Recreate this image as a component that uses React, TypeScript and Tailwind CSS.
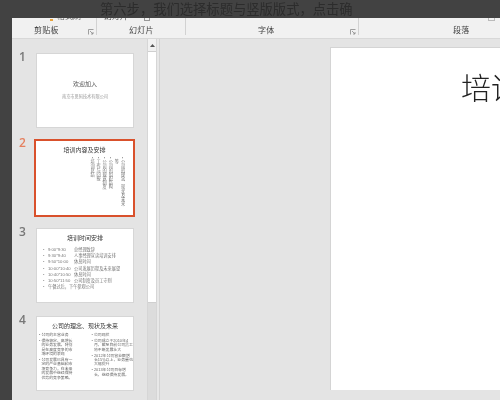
const cjk = "font-['Liberation_Sans','Noto_Sans_CJK_SC',sans-serif]";

function Launcher() {
  return (
    <svg width="6" height="6" viewBox="0 0 6 6" className="shrink-0">
      <path d="M0.5 5.5V0.5H5.5M2 2L5 5M5 3V5H3" fill="none" stroke="#8a8a8a" strokeWidth="0.8" />
    </svg>
  );
}

function Group({ w, label, launcher, pad, children }: { w: string; label: string; launcher?: boolean; pad: string; children?: React.ReactNode }) {
  return (
    <div className={`${w} h-full flex flex-col`}>
      <div className="h-[18px] flex border-r border-[#d2d2d2] relative">
        <div className="flex-1 min-w-0 overflow-hidden">{children}</div>
        {launcher && <div className="absolute right-[2px] bottom-[0px]"><Launcher /></div>}
      </div>
      <div className={`-mt-[11px] h-[14px] flex items-center ${pad}`}>
        <span className="text-[8px] leading-[10px] text-[#444] tracking-[0.3px]">{label}</span>
      </div>
    </div>
  );
}

function Thumb({ n, active, children, mt }: { n: number; active?: boolean; children: React.ReactNode; mt: string }) {
  return (
    <div className={`flex ${mt}`}>
      <div className={`w-[24px] pl-[7px] -mt-[3px] text-[12px] leading-[14px] font-['Open_Sans',sans-serif] font-semibold ${active ? "text-[#e5805f]" : "text-[#777]"}`}>{n}</div>
      {active ? (
        <div className="w-[101px] h-[78px] -ml-[2px] border-[2px] border-[#d9512c] bg-white overflow-hidden">{children}</div>
      ) : (
        <div className="w-[98px] h-[75px] border border-[#d6d6d6] bg-white overflow-hidden">{children}</div>
      )}
    </div>
  );
}

const schedule = [
  ["9:00*9:30", "总经理致辞"],
  ["9:30*9:40", "人事经理宣读培训安排"],
  ["9:50*10:00", "休息时间"],
  ["10:00*10:40", "公司发展历程及未来展望"],
  ["10:40*10:50", "休息时间"],
  ["10:50*11:50", "公司制度及员工守则"],
];

export default function App() {
  return (
    <div className="w-[500px] h-[400px] overflow-hidden bg-[#424242]">
      <div className={`w-[502px] h-[402px] overflow-hidden bg-[#424242] flex flex-col blur-[0.4px] ${cjk}`}>
        <div className="h-[18px] shrink-0 pl-[100px] overflow-hidden">
          <div className="text-[13.3px] leading-[19px] text-[#2c2c2c] whitespace-nowrap">第六步，我们选择标题与竖版版式，点击确</div>
        </div>
        <div className="flex-1 flex min-h-0 pl-[12px]">
          <div className="flex-1 flex flex-col min-w-0">
            <div className="h-[21px] shrink-0 bg-[#f1f1f1] border-b border-[#d8d8d8] flex">
              <Group w="w-[85px]" label="剪贴板" launcher pad="pl-[22px]">
                <div className="h-[3px] overflow-hidden flex items-end pl-[38px] gap-[4px]">
                  <div className="w-[3px] h-[2px] bg-[#e8a33d] shrink-0" />
                  <span className="text-[8px] leading-[8px] text-[#666] whitespace-nowrap">格式刷</span>
                </div>
              </Group>
              <Group w="w-[89px]" label="幻灯片" pad="pl-[32px]">
                <div className="h-[3px] overflow-hidden flex items-end pl-[7px] gap-[16px]">
                  <span className="text-[8px] leading-[8px] text-[#555] whitespace-nowrap">幻灯片</span>
                  <div className="w-[6px] h-[6px] border border-[#999] shrink-0" />
                </div>
              </Group>
              <Group w="w-[173px]" label="字体" launcher pad="pl-[72px]" />
              <div className="flex-1 flex flex-col">
                <div className="h-[3px] pl-[129px] overflow-hidden"><div className="w-[7px] h-[3px] border-x border-b border-[#bbb]" /></div>
                <div className="h-[4px]" />
                <div className="h-[14px] pl-[94px] flex items-center">
                  <span className="text-[8px] leading-[10px] text-[#444] tracking-[0.3px]">段落</span>
                </div>
              </div>
            </div>
            <div className="flex-1 flex min-h-0 bg-[#e4e4e4]">
              <div className="w-[135px] shrink-0 pt-[14px]">
                <Thumb n={1} mt="">
                  <div className="h-full flex flex-col items-center pt-[27px]">
                    <div className="text-[6px] leading-[7px] text-[#555]">欢迎加入</div>
                    <div className="mt-[6px] text-[4.2px] leading-[6px] text-[#999] whitespace-nowrap">南京市思码技术有限公司</div>
                  </div>
                </Thumb>
                <Thumb n={2} active mt="mt-[11px]">
                  <div className="h-full flex flex-col pt-[6px]">
                    <div className="text-[6px] leading-[7px] text-[#333] text-center">培训内容及安排</div>
                    <div className="mt-[3px] pr-[8px] flex justify-end">
                      <div className="[writing-mode:vertical-rl] text-[4.2px] leading-[6.1px] text-[#777] whitespace-nowrap">
                        <div>• 公司的理念、现状及未来</div>
                        <div>&nbsp;&nbsp;等</div>
                        <div>• 公司的组织结构</div>
                        <div>• 公司的规章制度</div>
                        <div>• 工作与回报</div>
                        <div>• 培训总结</div>
                      </div>
                    </div>
                  </div>
                </Thumb>
                <Thumb n={3} mt="mt-[11px]">
                  <div className="h-full flex flex-col pt-[6px]">
                    <div className="text-[6px] leading-[7px] text-[#333] text-center">培训时间安排</div>
                    <div className="mt-[5px] pl-[6px] text-[4.2px] leading-[6.2px] text-[#777] whitespace-nowrap">
                      {schedule.map(([t, s]) => (
                        <div key={t} className="flex">
                          <span className="w-[5px]">•</span>
                          <span className="w-[26px]">{t}</span>
                          <span>{s}</span>
                        </div>
                      ))}
                      <div className="flex"><span className="w-[5px]">•</span><span>午餐过后，下午参观公司</span></div>
                    </div>
                  </div>
                </Thumb>
                <Thumb n={4} mt="mt-[13px]">
                  <div className="h-full flex flex-col pt-[6px]">
                    <div className="text-[6px] leading-[7px] text-[#333] text-center whitespace-nowrap">公司的理念、现状及未来</div>
                    <div className="mt-[3px] pl-[2px] flex text-[3.9px] leading-[4.4px] text-[#666]">
                      <div className="w-[53px] pr-[18px] flex flex-col gap-[1.5px]">
                        <div className="flex gap-[1px]"><span>•</span><span>公司的主营业务</span></div>
                        <div className="flex gap-[1px]"><span>•</span><span>保持稳定、高增长的业务发展。特别是在高度竞争的市场环境的表现</span></div>
                        <div className="flex gap-[1px]"><span>•</span><span>公司发展已具有一定的产业基础和市场竞争力，在未来的发展中继续保持优势的竞争策略。</span></div>
                      </div>
                      <div className="w-[42px] flex flex-col gap-[1.5px]">
                        <div className="flex gap-[1px]"><span>•</span><span>公司现状</span></div>
                        <div className="flex gap-[1px]"><span>•</span><span>公司成立于2010年4月，截至目前公司员工将不断发展壮大</span></div>
                        <div className="flex gap-[1px]"><span>•</span><span>2012年公司营业额增长15%以上，业务量也大幅提升</span></div>
                        <div className="flex gap-[1px]"><span>•</span><span>2013年公司目标增长，继续保持发展。</span></div>
                      </div>
                    </div>
                  </div>
                </Thumb>
              </div>
              <div className="w-[10px] shrink-0 flex flex-col bg-white border-x border-[#d6d6d6]">
                <div className="h-[13px] shrink-0 bg-[#f1f1f1] border-b border-[#cfcfcf] flex items-center justify-center">
                  <svg width="5" height="3" viewBox="0 0 5 3"><path d="M0 3L2.5 0L5 3Z" fill="#555" /></svg>
                </div>
                <div className="h-[251px] shrink-0 bg-white border-b border-[#cfcfcf]" />
                <div className="flex-1 bg-[#dcdcdc]" />
              </div>
              <div className="w-[2px] shrink-0 bg-[#e8e8e8]" />
              <div className="w-[1px] shrink-0 bg-[#d4d4d4]" />
              <div className="flex-1 flex pt-[8px] pl-[170px] min-w-0 overflow-hidden">
                <div className="flex-1 bg-white border-l border-t border-[#d4d4d4] mb-[12px] overflow-hidden pt-[23px] pl-[130px]">
                  <div className="text-[30px] leading-[36px] text-[#222] whitespace-nowrap font-light">培训</div>
                </div>
              </div>
            </div>
          </div>
        </div>
      </div>
    </div>
  );
}
